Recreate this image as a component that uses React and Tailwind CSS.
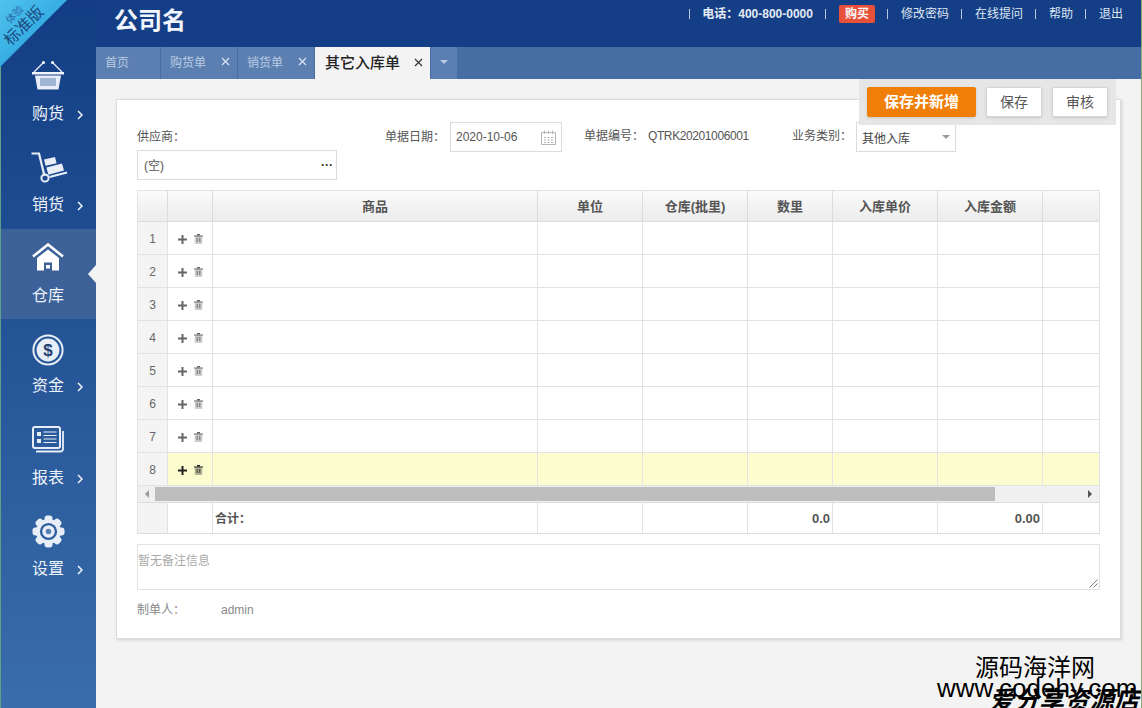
import React from "react";

const font = '"Liberation Sans","Noto Sans CJK SC",sans-serif';

// sidebar icons
const Basket = () => (
  <svg width="32" height="30" viewBox="0 0 32 30" fill="none">
    <path d="M2 12 L11 3 M30 12 L21 3" stroke="#e8eef8" strokeWidth="1.4" />
    <circle cx="11.5" cy="2.5" r="1.5" fill="#fff" />
    <circle cx="20.5" cy="2.5" r="1.5" fill="#fff" />
    <rect x="0" y="12" width="32" height="2.5" fill="#f0f4fb" />
    <path d="M3 15.5 H29 L26.5 29.5 H5.5 Z" fill="#e8eef8" />
    <path d="M9 18 V26 M11 18 V26 M13 18 V26 M15 18 V26 M17 18 V26 M19 18 V26 M21 18 V26 M23 18 V26" stroke="#5b7fb0" strokeWidth="1" />
  </svg>
);

const Cart = () => (
  <svg className="ml-[3px]" width="37" height="31" viewBox="0 0 37 31" fill="none">
    <path d="M0.5 1.5 H8 L13.5 24" stroke="#e8eef8" strokeWidth="2.2" />
    <circle cx="14" cy="26" r="3.6" stroke="#e8eef8" strokeWidth="2" />
    <path d="M18.5 25 L36 20.5" stroke="#e8eef8" strokeWidth="2" />
    <path d="M13 7.5 L24 5 L25.6 11.2 L14.6 13.8 Z" fill="#e8eef8" />
    <path d="M15.4 15.5 L31 11.5 L33 18.5 L17.4 22.8 Z" fill="#e8eef8" />
  </svg>
);

const House = () => (
  <svg width="32" height="28" viewBox="0 0 32 28" fill="none">
    <path d="M1 13.5 L16 1.5 L31 13.5" stroke="#fff" strokeWidth="2.6" />
    <path fillRule="evenodd" d="M16 6.5 L27 15 V27.5 H5 V15 Z M12 19.5 H20 V27.5 H12 Z" fill="#fff" />
    <rect x="14" y="22" width="4" height="3.5" fill="#fff" />
  </svg>
);

const Coin = () => (
  <svg width="32" height="32" viewBox="0 0 32 32">
    <circle cx="16" cy="16" r="14.6" fill="none" stroke="#e8eef8" strokeWidth="2" />
    <circle cx="16" cy="16" r="11.4" fill="#e8eef8" />
    <text x="16" y="22" textAnchor="middle" fontSize="17" fontWeight="700" fill="#1f3f70" fontFamily="Liberation Sans">$</text>
  </svg>
);

const Report = () => (
  <svg width="32" height="27" viewBox="0 0 32 27" fill="none">
    <rect x="1" y="1" width="27" height="21" rx="2" stroke="#e8eef8" strokeWidth="2" />
    <path d="M31 5 V23 Q31 25.5 28 25.5 H4" stroke="#e8eef8" strokeWidth="1.8" />
    <rect x="5" y="6" width="4" height="4" fill="#e8eef8" />
    <rect x="5" y="13" width="4" height="4" fill="#e8eef8" />
    <path d="M11.5 6 H24.5 M11.5 9.5 H24.5 M11.5 13 H24.5 M11.5 16.5 H24.5" stroke="#e8eef8" strokeWidth="1.1" />
  </svg>
);

const Gear = () => (
  <svg width="33" height="33" viewBox="0 0 33 33">
    <g fill="#e8eef8">
      {[0, 45, 90, 135, 180, 225, 270, 315].map((a) => (
        <rect key={a} x="12.5" y="0.5" width="8" height="8" rx="3" transform={`rotate(${a} 16.5 16.5)`} />
      ))}
      <circle cx="16.5" cy="16.5" r="12.5" />
    </g>
    <circle cx="16.5" cy="16.5" r="8.6" fill="#2f5f9f" />
    <circle cx="16.5" cy="16.5" r="6.2" fill="#e8eef8" />
    <circle cx="16.5" cy="16.5" r="2.8" fill="#5b7fb0" />
  </svg>
);

const navItems = [
  { name: "购货", icon: <Basket />, pad: "pt-[11px]", h: "h-[90px]", gap: "mt-[14px]" },
  { name: "销货", icon: <Cart />, pad: "pt-[13px]", h: "h-[90px]", gap: "mt-[12px]" },
  { name: "仓库", icon: <House />, pad: "pt-[14px]", h: "h-[90px]", gap: "mt-[15px]", active: true },
  { name: "资金", icon: <Coin />, pad: "pt-[15px]", h: "h-[91px]", gap: "mt-[10px]" },
  { name: "报表", icon: <Report />, pad: "pt-[16px]", h: "h-[90px]", gap: "mt-[15px]" },
  { name: "设置", icon: <Gear />, pad: "pt-[15px]", h: "h-[91px]", gap: "mt-[11px]" },
];

function Sidebar() {
  return (
    <div className="w-[96px] shrink-0 pt-[49px] bg-gradient-to-b from-[#123d84] to-[#3a6dab] border-l border-[#5fa08c]">
      {navItems.map((item) => (
        <div
          key={item.name}
          className={`relative flex flex-col items-center pr-[1px] ${item.h} ${item.pad} ${item.active ? "bg-[#3d6299]" : ""}`}
        >
          <div className="flex justify-center">{item.icon}</div>
          <div className={`flex items-center self-start pl-[31px] ${item.gap}`}>
            <span className="text-[16px] leading-[20px] text-[#eef2f9]">{item.name}</span>
            {!item.active && (
              <svg className="ml-[13px] mt-[2px]" width="6" height="10" viewBox="0 0 6 10" fill="none">
                <path d="M1 1 L5 5 L1 9" stroke="#f2f5fa" strokeWidth="1.5" />
              </svg>
            )}
          </div>
          {item.active && (
            <div className="absolute right-0 top-[36px] w-0 h-0 border-y-[9px] border-y-transparent border-r-[8px] border-r-[#f3f3f3]" />
          )}
        </div>
      ))}
    </div>
  );
}

function Header() {
  const links = ["修改密码", "在线提问", "帮助", "退出"];
  const Sep = () => <span className="w-px h-[10px] bg-[#b9c8df]" />;
  return (
    <div className="h-[47px] bg-[#143f86] flex items-start justify-between pl-[18px] pr-[18px]">
      <div className="text-[24px] leading-[34px] mt-[4px] font-bold text-[#f2f5fb]">公司名</div>
      <div className="flex items-center gap-[12.5px] text-[12px] text-[#dfe6f2] h-[18px] mt-[5px]">
        <Sep />
        <span className="font-bold text-[#e4eaf4]">电话：400-800-0000</span>
        <Sep />
        <span className="bg-[#e8503a] text-white font-bold rounded-[2px] w-[36px] h-[18px] leading-[18px] text-center">购买</span>
        {links.map((l) => (
          <React.Fragment key={l}>
            <Sep />
            <span>{l}</span>
          </React.Fragment>
        ))}
      </div>
    </div>
  );
}

function Close({ color }) {
  return (
    <svg width="9" height="9" viewBox="0 0 9 9" fill="none">
      <path d="M1 1 L8 8 M8 1 L1 8" stroke={color} strokeWidth="1.2" />
    </svg>
  );
}

function Tabs() {
  return (
    <div className="h-[32px] bg-[#466ea5] flex gap-px">
      <div className="w-[64px] bg-[#5b7fb0] pl-[9px] text-[12px] leading-[32px] text-[#b9cbe4]">首页</div>
      {["购货单", "销货单"].map((t) => (
        <div key={t} className="w-[76px] bg-[#5b7fb0] pl-[9px] pr-[7px] flex items-center justify-between text-[12px] text-[#b9cbe4]">
          <span>{t}</span>
          <span className="-mt-[3px]"><Close color="#dbe4f1" /></span>
        </div>
      ))}
      <div className="w-[115px] bg-[#f3f3f3] pl-[10px] pr-[7px] flex items-center justify-between text-[15px] font-medium text-[#222]">
        <span>其它入库单</span>
        <span className="-mt-[2px]"><Close color="#333" /></span>
      </div>
      <div className="w-[26px] bg-[#5b7fb0] flex items-center justify-center">
        <div className="w-0 h-0 -mt-[2px] border-x-[4px] border-x-transparent border-t-[4px] border-t-[#b9cbe4]" />
      </div>
    </div>
  );
}

const Calendar = () => (
  <svg width="15" height="15" viewBox="0 0 15 15" fill="none" stroke="#b5b5b5">
    <path d="M0.5 2.5 H14.5 V14.5 H0.5 Z M3.5 0.5 V4 M7.5 0.5 V4 M11.5 0.5 V4" />
    <path d="M3 7.5 H5 M6.5 7.5 H8.5 M10 7.5 H12 M3 10 H5 M6.5 10 H8.5 M10 10 H12 M3 12.5 H5 M6.5 12.5 H8.5 M10 12.5 H12" />
  </svg>
);

function Form() {
  return (
    <div className="h-[70px] text-[12px] text-[#555]">
      <div className="flex items-start h-[30px] pl-[20px]">
        <span className="w-[248px] leading-[30px]">供应商：</span>
        <span className="w-[65px] leading-[30px]">单据日期：</span>
        <div className="w-[112px] h-[30px] border border-[#dcdcdc] flex items-center justify-between pl-[5px] pr-[5px]">
          <span className="text-[#555]">2020-10-06</span>
          <Calendar />
        </div>
        <span className="ml-[22px] w-[64px] leading-[28px]">单据编号：</span>
        <span className="w-[144px] leading-[28px] tracking-[-0.4px]">QTRK20201006001</span>
        <span className="w-[64px] leading-[28px]">业务类别：</span>
        <div className="w-[100px] h-[30px] border border-[#dcdcdc] flex items-center justify-between pl-[5px] pr-[4px] text-[#444]">
          <span className="mt-[3px]">其他入库</span>
          <div className="w-0 h-0 border-x-[4px] border-x-transparent border-t-[4px] border-t-[#999] mr-[1px]" />
        </div>
      </div>
      <div className="ml-[20px] -mt-[2px] w-[200px] h-[30px] border border-[#dcdcdc] flex items-center justify-between pl-[6px] pr-[3px]">
        <span className="mt-[2px]">(空)</span>
        <span className="font-bold text-[#333] text-[12px] leading-[12px]">···</span>
      </div>
    </div>
  );
}

const cols = "grid grid-cols-[30px_45px_325px_105px_105px_85px_105px_105px_56px]";
const heads = ["", "", "商品", "单位", "仓库(批里)", "数里", "入库单价", "入库金额", ""];

const Trash = ({ color }) => (
  <svg width="9" height="10" viewBox="0 0 9 10" fill="none">
    <path d="M0 2 H9 M3 0.6 H6" stroke={color} strokeWidth="1.2" />
    <path d="M1.2 2.5 H7.8 V9.5 H1.2 Z" fill={color} opacity="0.35" stroke={color} strokeWidth="0.8" />
    <path d="M3.2 4 V8 M5.8 4 V8" stroke={color} strokeWidth="0.9" />
  </svg>
);

const Plus = ({ color }) => (
  <svg width="9" height="9" viewBox="0 0 9 9">
    <path d="M4.5 0 V9 M0 4.5 H9" stroke={color} strokeWidth="2" />
  </svg>
);

function Row({ n }) {
  const hot = n === 8;
  const color = hot ? "#222" : "#666";
  return (
    <div className={`${cols} h-[33px] border-b border-[#e2e2e2] ${hot ? "bg-[#fbfdcf]" : ""}`}>
      <div className="bg-[#f4f4f4] border-r border-[#e2e2e2] text-center pt-[2px] leading-[30px] text-[12px] text-[#666]">{n}</div>
      <div className="border-r border-[#e2e2e2] flex items-center gap-[7px] pl-[10px] pt-[2px]">
        <Plus color={color} />
        <Trash color={color} />
      </div>
      {[0, 1, 2, 3, 4, 5].map((i) => (
        <div key={i} className="border-r border-[#e2e2e2]" />
      ))}
      <div />
    </div>
  );
}

function Grid() {
  return (
    <div className="w-[963px] border border-[#e2e2e2] border-b-[#dcdcdc]">
      <div className={`${cols} h-[31px] border-b border-[#dcdcdc] bg-gradient-to-b from-[#fafafa] to-[#ececec]`}>
        {heads.map((h, i) => (
          <div key={i} className="border-r border-[#dcdcdc] last:border-r-0 text-center leading-[31px] text-[13px] font-bold text-[#555]">
            {h}
          </div>
        ))}
      </div>
      {[1, 2, 3, 4, 5, 6, 7, 8].map((n) => (
        <Row key={n} n={n} />
      ))}
      <div className="h-[17px] bg-[#f0f0f0] border-b border-[#dcdcdc] flex items-center">
        <div className="w-[17px] flex justify-center">
          <div className="w-0 h-0 border-y-[4px] border-y-transparent border-r-[4px] border-r-[#999]" />
        </div>
        <div className="w-[840px] h-[14px] bg-[#bdbdbd]" />
        <div className="flex-1 flex justify-end pr-[7px]">
          <div className="w-0 h-0 border-y-[4px] border-y-transparent border-l-[4px] border-l-[#555]" />
        </div>
      </div>
      <div className={`${cols} h-[30px] text-[12px] font-bold text-[#555] leading-[28px]`}>
        <div className="bg-[#f4f4f4] border-r border-[#e2e2e2]" />
        <div className="border-r border-[#e2e2e2]" />
        <div className="border-r border-[#e2e2e2] pl-[2px] pt-[2px]">合计：</div>
        <div className="border-r border-[#e2e2e2]" />
        <div className="border-r border-[#e2e2e2]" />
        <div className="border-r border-[#e2e2e2] text-right pr-[2px] pt-[2px] text-[13px]">0.0</div>
        <div className="border-r border-[#e2e2e2]" />
        <div className="border-r border-[#e2e2e2] text-right pr-[2px] pt-[2px] text-[13px]">0.00</div>
        <div />
      </div>
    </div>
  );
}

function Toolbar() {
  return (
    <div className="absolute left-[763px] top-0 w-[257px] h-[46px] bg-[#e6e6e6] flex items-start gap-[10px] pl-[8px] pt-[8px] text-[14px]">
      <button className="w-[109px] h-[30px] bg-[#f07f09] rounded-[2px] text-[15px] text-white font-bold shadow-sm">保存并新增</button>
      <button className="w-[56px] h-[30px] bg-white border border-[#d5d5d5] rounded-[2px] text-[#555] shadow-sm">保存</button>
      <button className="w-[56px] h-[30px] bg-white border border-[#d5d5d5] rounded-[2px] text-[#555] shadow-sm">审核</button>
    </div>
  );
}

function Card() {
  return (
    <div className="ml-[20px] mt-[20px] w-[1005px] h-[540px] bg-white border border-[#dcdcdc] shadow-[1px_1px_3px_rgba(0,0,0,0.15)] pt-[22px]">
      <Form />
      <div className="pl-[20px] -mt-[2px]">
        <Grid />
      </div>
      <div className="relative ml-[20px] mt-[10px] w-[963px] h-[46px] border border-[#e2e2e2] pt-[7px] text-[12px] text-[#aaa]">
        暂无备注信息
        <svg className="absolute right-[1px] bottom-[1px]" width="9" height="9" viewBox="0 0 9 9" fill="none" stroke="#777">
          <path d="M0.5 8.5 L8.5 0.5 M4.5 8.5 L8.5 4.5" />
        </svg>
      </div>
      <div className="flex ml-[20px] mt-[12px] text-[12px] leading-[16px] text-[#888]">
        <span className="w-[84px]">制单人：</span>
        <span>admin</span>
      </div>
    </div>
  );
}

export default function App() {
  return (
    <div className="relative flex w-[1142px] h-[708px] overflow-hidden bg-[#f3f3f3] border-r border-[#8aa878]" style={{ fontFamily: font }}>
      <Sidebar />
      <div className="flex-1 flex flex-col min-w-0">
        <Header />
        <Tabs />
        <div className="relative flex-1">
          <Toolbar />
          <Card />
        </div>
      </div>

      {/* corner ribbon */}
      <div className="absolute left-0 top-0 w-[67px] h-[67px] bg-gradient-to-br from-[#4fc3ee] to-[#1797d8] [clip-path:polygon(0_0,100%_0,0_100%)]" />
      <div className="absolute left-[5px] top-[10px] w-[20px] text-center -rotate-45 text-[10px] leading-none text-[#2a6aa8]">体验</div>
      <div className="absolute left-[0px] top-[18px] w-[48px] text-center -rotate-45 text-[16px] leading-none text-[#1d4a7f] whitespace-nowrap">标准版</div>

      {/* watermark */}
      <div className="absolute left-[975px] top-[654px] text-[24px] leading-[28px] text-black whitespace-nowrap">源码海洋网</div>
      <div className="absolute left-[937px] top-[674px] text-[26px] leading-[28px] text-black whitespace-nowrap">www.codehy.com</div>
      <div className="absolute left-[989px] top-[686px] text-[25px] leading-[28px] text-black italic font-bold whitespace-nowrap">爱分享资源店</div>
    </div>
  );
}
